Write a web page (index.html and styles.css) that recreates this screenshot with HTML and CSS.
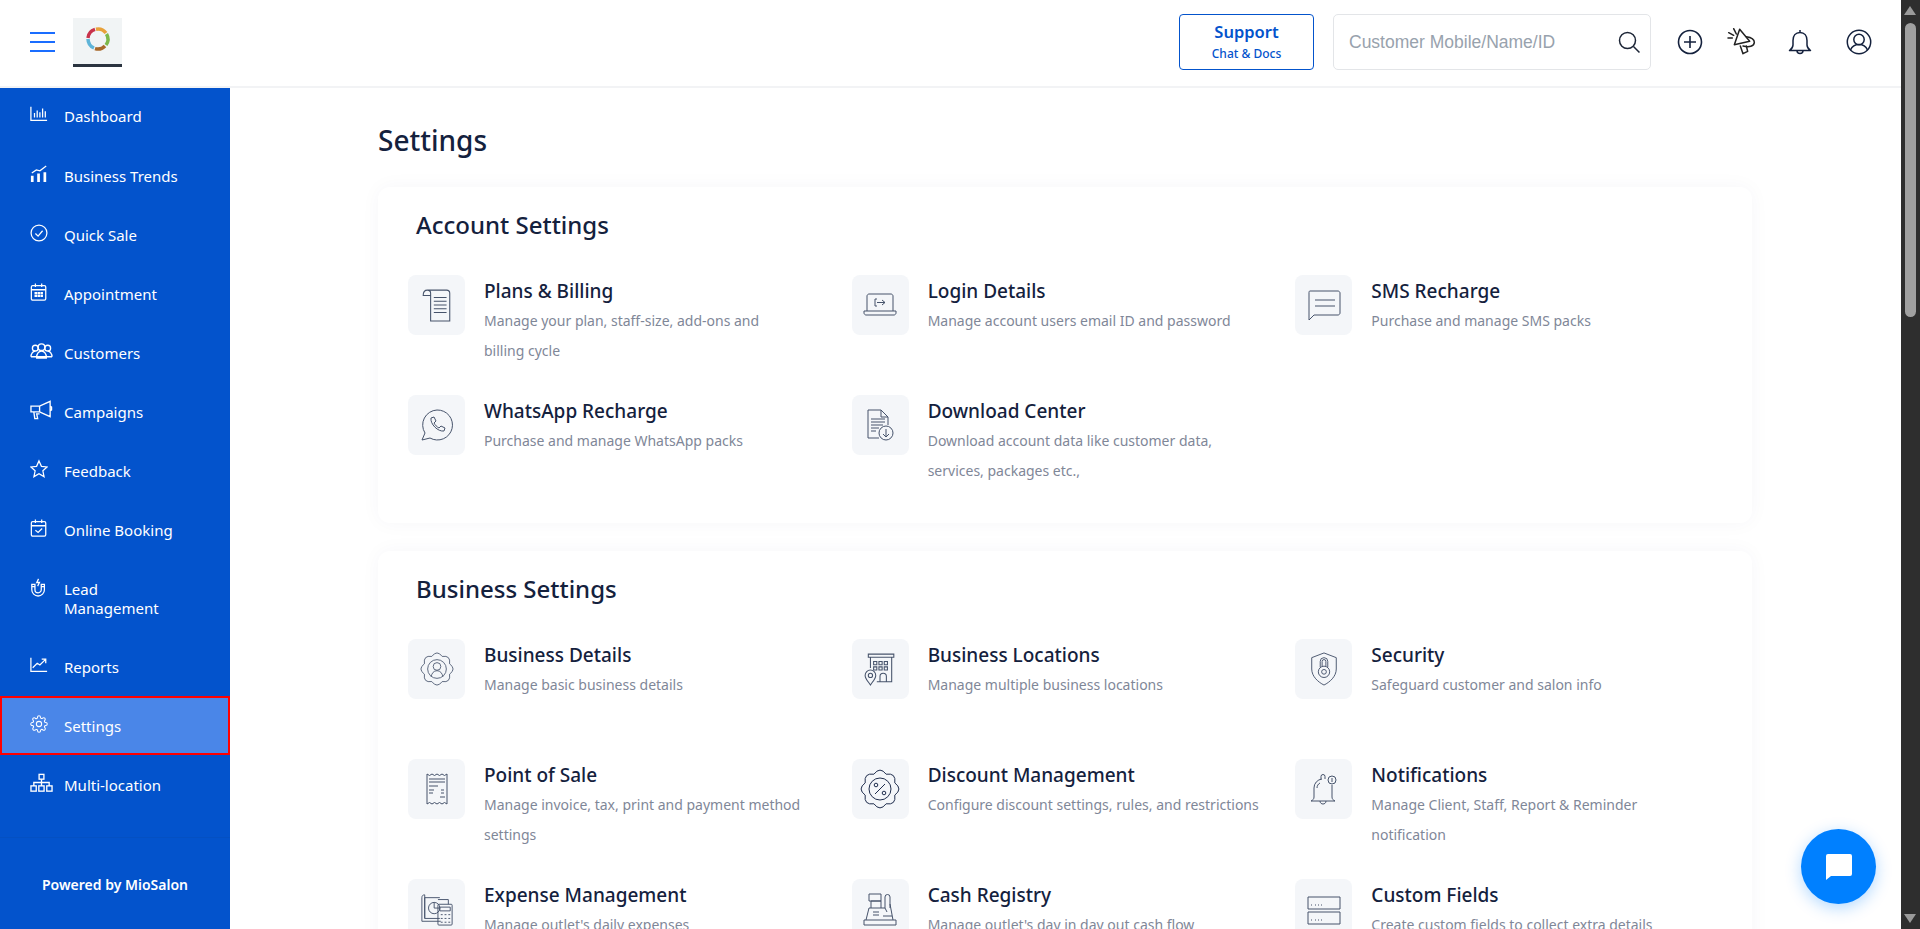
FILE: index.html

```html
<!DOCTYPE html>
<html lang="en">
<head>
  <meta charset="UTF-8" />
  <meta name="viewport" content="width=device-width, initial-scale=1.0" />
  <title>Settings</title>
  <link rel="stylesheet" href="styles.css">
</head>
<body>
  <header class="topbar">
    <div class="brand">
      <button class="menu-btn"><span></span><span></span><span></span></button>
      <div class="logo">
        <svg viewBox="0 0 30 30" width="30" height="30" fill="none" stroke-width="3.500">
          <path d="M5 14A10 10 0 0 1 12 5.400" stroke="#c8324a"/>
          <path d="M13 5.200A10 10 0 0 1 23 9" stroke="#e8a13a"/>
          <path d="M23.500 10A10 10 0 0 1 23 21" stroke="#7db84a"/>
          <path d="M22 22A10 10 0 0 1 12 24.600" stroke="#a8682a"/>
          <path d="M11 24A10 10 0 0 1 5 15" stroke="#5fb4d8"/>
        </svg>
      </div>
    </div>
    <div class="top-actions">
      <a class="support-btn"><b>Support</b><small>Chat &amp; Docs</small></a>
      <div class="search-box">
        <input type="text" placeholder="Customer Mobile/Name/ID" />
        <svg viewBox="0 0 24 24" width="24" height="24" fill="none" stroke="#1c2536" stroke-width="1.500"><circle cx="10.500" cy="10.500" r="8"/><path d="M16.500 16.500l6 6"/></svg>
      </div>
      <svg class="top-icon plus-icon" viewBox="0 0 26 26" width="26" height="26" fill="none" stroke="#14213d" stroke-width="1.600"><circle cx="13" cy="13" r="11.500"/><path d="M13 7v12M7 13h12"/></svg>
      <svg class="top-icon mega-icon" viewBox="0 0 90 90" width="30" height="30" fill="none" stroke="#222" stroke-width="4.500" stroke-linejoin="round" stroke-linecap="round"><path d="M22 53L38 7l30 36z"/><path d="M58 29c14 2 24 8 24 17 0 12-16 16-34 11"/><path d="M40 57l8 23 14-7-4-16"/><path d="M20 5l8 16M5 17l15 8M3 33h13"/></svg>
      <svg class="top-icon bell-icon" viewBox="0 0 24 27" width="24" height="27" fill="none" stroke="#14213d" stroke-width="1.500" stroke-linejoin="round"><path d="M12 1v2.500M12 3.500c-4.500 0-7 3.500-7 8v4.500c0 2-1.500 4-3.500 5.500h21c-2-1.500-3.500-3.500-3.500-5.500v-4.500c0-4.500-2.500-8-7-8z"/><path d="M9 21.500c0 4 6 4 6 0"/></svg>
      <svg class="top-icon" viewBox="0 0 26 26" width="26" height="26" fill="none" stroke="#14213d" stroke-width="1.500"><circle cx="13" cy="13" r="11.700"/><circle cx="13" cy="10.500" r="5.200"/><path d="M4.500 21c1.500-3.500 5-5.500 8.500-5.500s7 2 8.500 5.500"/></svg>
    </div>
  </header>

  <div class="layout">
    <aside class="sidebar">
      <nav class="side-nav">
        <a class="nav-item"><svg viewBox="0 0 20 20" class="nav-icon"><path d="M1 2v15h18M5 14V9M8 14V6M11 14V8M14 14V4M17 14V7"/></svg><span>Dashboard</span></a>
        <a class="nav-item"><svg viewBox="0 0 20 20" class="nav-icon"><path d="M2 9l5-3.500 4 1L18 1"/><path class="solid" d="M1 12h3v7H1zM8 9.500h3V19H8zM15 8h3v11h-3z"/></svg><span>Business Trends</span></a>
        <a class="nav-item"><svg viewBox="0 0 20 20" class="nav-icon"><circle cx="10" cy="10" r="8.800"/><path d="M6 10.500l3 3 5-6"/></svg><span>Quick Sale</span></a>
        <a class="nav-item"><svg viewBox="0 0 20 20" class="nav-icon"><rect x="1.500" y="3" width="16" height="16" rx="1.500"/><path d="M1.500 7.500h16M6 .5v4M13 .5v4"/><path class="solid" d="M5 10h2.800v2.700H5zM8.300 10h2.800v2.700H8.300zM11.600 10h2.800v2.700h-2.800zM5 13.400h2.800v2.200H5zM8.300 13.400h2.800v2.200H8.300zM11.600 13.400h2.800v2.200h-2.800z"/></svg><span>Appointment</span></a>
        <a class="nav-item"><svg viewBox="0 0 24 20" class="nav-icon wide"><circle cx="12" cy="6" r="3.500"/><circle cx="5.500" cy="7" r="3"/><circle cx="18.500" cy="7" r="3"/><path d="M1 16c0-3 2-6 4.500-6M23 16c0-3-2-6-4.500-6M1 16h22M7 16c0-3 2-6 5-6s5 3 5 6v1.500H7z"/></svg><span>Customers</span></a>
        <a class="nav-item"><svg viewBox="0 0 24 20" class="nav-icon wide"><path d="M1 6h9l11-5v16l-11-5H1zM21 6l1.500 1v3L21 11M4 12l1 7h3l-1-5h3"/><path d="M10 6v6"/></svg><span>Campaigns</span></a>
        <a class="nav-item"><svg viewBox="0 0 20 20" class="nav-icon"><path d="M10 1l2.700 6 6.300.7-4.700 4.300 1.300 6.500L10 15.200 4.400 18.500 5.700 12 1 7.700 7.300 7z"/></svg><span>Feedback</span></a>
        <a class="nav-item"><svg viewBox="0 0 20 20" class="nav-icon"><rect x="1.500" y="3" width="16" height="16" rx="1.500"/><path d="M1.500 7.500h16M6 .5v4M13 .5v4M6 12.500l3 2.500 4.500-4.500"/></svg><span>Online Booking</span></a>
        <a class="nav-item"><svg viewBox="0 0 20 20" class="nav-icon"><path d="M2 7v6a7 7 0 0 0 14 0V7h-3.500v6a3.500 3.500 0 0 1-7 0V7zM2 9.500h3.500M12.500 9.500H16"/><path d="M9.500 1L7.500 5h3l-2 4"/></svg><span>Lead<br>Management</span></a>
        <a class="nav-item"><svg viewBox="0 0 20 20" class="nav-icon"><path d="M1 2v15h18M3 13l5-5 3 2 6-6M13 3.500h4.500V8"/></svg><span>Reports</span></a>
        <a class="nav-item active"><svg viewBox="0 0 24 24" class="nav-icon"><circle cx="12" cy="12" r="3.500"/><path d="M19.400 15a1.650 1.650 0 0 0 .33 1.820l.06.06a2 2 0 0 1 0 2.830 2 2 0 0 1-2.830 0l-.06-.06a1.650 1.650 0 0 0-1.820-.33 1.650 1.650 0 0 0-1 1.510V21a2 2 0 0 1-2 2 2 2 0 0 1-2-2v-.09A1.650 1.650 0 0 0 9 19.400a1.650 1.650 0 0 0-1.820.33l-.06.06a2 2 0 0 1-2.830 0 2 2 0 0 1 0-2.830l.06-.06a1.650 1.650 0 0 0 .33-1.820 1.650 1.650 0 0 0-1.510-1H3a2 2 0 0 1-2-2 2 2 0 0 1 2-2h.09A1.650 1.650 0 0 0 4.600 9a1.650 1.650 0 0 0-.33-1.820l-.06-.06a2 2 0 0 1 0-2.830 2 2 0 0 1 2.830 0l.06.06a1.650 1.650 0 0 0 1.820.33H9a1.650 1.650 0 0 0 1-1.510V3a2 2 0 0 1 2-2 2 2 0 0 1 2 2v.09a1.650 1.650 0 0 0 1 1.510 1.650 1.650 0 0 0 1.820-.33l.06-.06a2 2 0 0 1 2.830 0 2 2 0 0 1 0 2.830l-.06.06a1.650 1.650 0 0 0-.33 1.820V9a1.650 1.650 0 0 0 1.510 1H21a2 2 0 0 1 2 2 2 2 0 0 1-2 2h-.09a1.650 1.650 0 0 0-1.510 1z"/></svg><span>Settings</span></a>
        <a class="nav-item"><svg viewBox="0 0 24 20" class="nav-icon wide"><rect x="9.500" y="1" width="5" height="5"/><rect x="1" y="13" width="5.500" height="5.500"/><rect x="9.200" y="13" width="5.500" height="5.500"/><rect x="17.500" y="13" width="5.500" height="5.500"/><path d="M12 6v7M4 13V9.500h16V13"/></svg><span>Multi-location</span></a>
      </nav>
      <div class="powered">Powered by MioSalon</div>
    </aside>

    <main class="content">
      <h1 class="page-title">Settings</h1>

      <section class="card">
        <h2>Account Settings</h2>
        <div class="tile-grid">
          <div class="tile">
            <div class="tile-icon"><svg viewBox="0 0 32 32"><path d="M7 2h18c2 0 3 1 3 3v26H10V5c0-2-1-3-3-3S3 3 3 7h7M13 9h12M13 12.500h12M13 16h12M13 19.500h12M13 23h12"/></svg></div>
            <div><h3>Plans &amp; Billing</h3><p>Manage your plan, staff-size, add-ons and<br>billing cycle</p></div>
          </div>
          <div class="tile">
            <div class="tile-icon"><svg viewBox="0 0 34 32"><path d="M4 22V7c0-1 1-2 2-2h22c1 0 2 1 2 2v15M1 22h32v2c0 1-1 2-2 2H3c-1 0-2-1-2-2zM14 10h-2v7h2M14 13.500h8M19 11l3 2.500-3 2.500"/></svg></div>
            <div><h3>Login Details</h3><p>Manage account users email ID and password</p></div>
          </div>
          <div class="tile">
            <div class="tile-icon"><svg viewBox="0 0 34 32"><path d="M3 2h28c1 0 2 1 2 2v20c0 1-1 2-2 2H7l-5 5V4c0-1 0-2 1-2zM8 11h20M8 17h20"/></svg></div>
            <div><h3>SMS Recharge</h3><p>Purchase and manage SMS packs</p></div>
          </div>
          <div class="tile">
            <div class="tile-icon"><svg viewBox="0 0 34 34"><path d="M17 2a15 15 0 1 1-7 28l-8 2 3-7A15 15 0 0 1 17 2z"/><path d="M11 10l3-1 2 4-2 2c1 2 3 4 5 5l2-2 4 2-1 3c-6 1-14-7-13-13z"/></svg></div>
            <div><h3>WhatsApp Recharge</h3><p>Purchase and manage WhatsApp packs</p></div>
          </div>
          <div class="tile">
            <div class="tile-icon"><svg viewBox="0 0 30 34"><path d="M14 30H3V2h13l7 7v8M16 2v7h7M6 11h14M6 14h14M6 17h12M6 20h8M6 23h5"/><circle cx="21" cy="25" r="7"/><path d="M21 21v8M18 26l3 3 3-3"/></svg></div>
            <div><h3>Download Center</h3><p>Download account data like customer data,<br>services, packages etc.,</p></div>
          </div>
        </div>
      </section>

      <section class="card">
        <h2>Business Settings</h2>
        <div class="tile-grid">
          <div class="tile">
            <div class="tile-icon"><svg viewBox="0 0 40 40"><path d="M34.800 13.900Q43 20 34.800 26.100Q36.300 36.300 26.100 34.800Q20 43 13.900 34.800Q3.700 36.300 5.200 26.100Q-3 20 5.200 13.900Q3.700 3.700 13.900 5.200Q20 -3 26.100 5.200Q36.300 3.700 34.800 13.900z"/><circle cx="20" cy="20" r="11"/><circle cx="20" cy="17" r="4.500"/><path d="M13 29c1-4 3-7 7-7s6 3 7 7"/></svg></div>
            <div><h3>Business Details</h3><p>Manage basic business details</p></div>
          </div>
          <div class="tile">
            <div class="tile-icon"><svg viewBox="0 0 32 32"><path d="M5 2h24v3H5zM7 5v10M27 5v23H13M10 9h3v3h-3zM15 9h3v3h-3zM20 9h3v3h-3zM10 14h3v3h-3zM15 14h3v3h-3zM20 14h3v3h-3zM16 28v-5a3 3 0 0 1 6 0v5"/><path d="M7 17a5 5 0 0 1 5 5c0 3-3 6-5 9-2-3-5-6-5-9a5 5 0 0 1 5-5z"/><circle cx="7" cy="22" r="2"/></svg></div>
            <div><h3>Business Locations</h3><p>Manage multiple business locations</p></div>
          </div>
          <div class="tile">
            <div class="tile-icon"><svg viewBox="0 0 32 36"><path d="M16 1l13 5v12c0 8-7 14-13 17C10 32 3 26 3 18V6z"/><circle cx="16" cy="21" r="6"/><circle cx="16" cy="21" r="2.500"/><path d="M12 16v-6a4 4 0 0 1 8 0v6M14 15v-5a2 2 0 0 1 4 0v5"/></svg></div>
            <div><h3>Security</h3><p>Safeguard customer and salon info</p></div>
          </div>
          <div class="tile">
            <div class="tile-icon"><svg viewBox="0 0 32 34"><path d="M6 2l2.500 1.500L11 2l2.500 1.500L16 2l2.500 1.500L21 2l2.500 1.500L26 2v30l-2.500-1.500L21 32l-2.500-1.500L16 32l-2.500-1.500L11 32l-2.500-1.500L6 32zM8 7h16M8 10h16M8 14h9M8 18h5M8 21h4M20 18h3M20 21h3M19 25h5"/></svg></div>
            <div><h3>Point of Sale</h3><p>Manage invoice, tax, print and payment method<br>settings</p></div>
          </div>
          <div class="tile">
            <div class="tile-icon"><svg class="big" viewBox="0 0 40 40"><path d="M34.800 13.900Q43 20 34.800 26.100Q36.300 36.300 26.100 34.800Q20 43 13.900 34.800Q3.700 36.300 5.200 26.100Q-3 20 5.200 13.900Q3.700 3.700 13.900 5.200Q20 -3 26.100 5.200Q36.300 3.700 34.800 13.900z"/><circle cx="20" cy="20" r="11"/><path d="M15 25l10-10"/><circle cx="16" cy="16" r="1.800"/><circle cx="24" cy="24" r="1.800"/></svg></div>
            <div><h3>Discount Management</h3><p>Configure discount settings, rules, and restrictions</p></div>
          </div>
          <div class="tile">
            <div class="tile-icon"><svg viewBox="0 0 32 34"><path d="M14 7a9 9 0 0 0-8 9v9c0 2-1 3-3 4h24c-2-1-3-2-3-4V13M13 7V4.500a2 2 0 0 1 4 0V7M12 29c0 4 6 4 6 0M9 16c0-2 1-4 3-5"/><circle cx="24" cy="8" r="4"/><path d="M24 6v4"/></svg></div>
            <div><h3>Notifications</h3><p>Manage Client, Staff, Report &amp; Reminder<br>notification</p></div>
          </div>
          <div class="tile">
            <div class="tile-icon"><svg viewBox="0 0 34 36"><path d="M20 6H4v22h16M4 3c-2 0-3 1-3 3v25h20M4 3v25"/><circle cx="14" cy="17" r="6"/><path d="M14 11v6h6"/><rect x="18" y="13" width="15" height="22" rx="1"/><path d="M20 16h11v4H20zM21 24h2M25 24h2M29 24h2M21 28h2M25 28h2M29 28h2M21 32h2M25 32h2M29 32h2M18 8h11v5"/></svg></div>
            <div><h3>Expense Management</h3><p>Manage outlet's daily expenses</p></div>
          </div>
          <div class="tile">
            <div class="tile-icon"><svg viewBox="0 0 34 34"><path d="M1 33v-5h32v5zM3 28l3-12h16l2 4M8 16V9h10v7M6 2h12v7H6zM10 20h6M10 23h6M22 16V5a2 2 0 0 1 5 0v11M27 12l3 16M20 24h9"/></svg></div>
            <div><h3>Cash Registry</h3><p>Manage outlet's day in day out cash flow</p></div>
          </div>
          <div class="tile">
            <div class="tile-icon"><svg viewBox="0 0 34 32"><path d="M1 4h32v12H1zM1 19h32v12H1zM4 12h1M4 27h1M8 12h1M11 12h1M14 12h1M8 27h1M11 27h1M14 27h1"/></svg></div>
            <div><h3>Custom Fields</h3><p>Create custom fields to collect extra details</p></div>
          </div>
        </div>
      </section>
    </main>
  </div>

  <button class="chat-btn">
    <svg viewBox="0 0 26 26" width="26" height="26"><path fill="#fff" d="M2 0h22a2 2 0 0 1 2 2v18a2 2 0 0 1-2 2H5l-5 4V2a2 2 0 0 1 2-2z"/></svg>
  </button>

  <div class="fake-scroll"><i class="arrow-up"></i><i class="thumb"></i><i class="arrow-down"></i></div>
</body>
</html>
```

FILE: styles.css

```css
* {
  box-sizing: border-box;
}
html, body {
  height: 100%;
  margin: 0;
  overflow: hidden;
}
body {
  font-family: "Noto Sans", Arial, sans-serif;
  background-color: #fff;
  color: #14213d;
  display: flex;
  flex-direction: column;
}
.topbar {
  height: 88px;
  flex: none;
  display: flex;
  align-items: center;
  justify-content: space-between;
  padding: 0 48px 2px 30px;
  background: #fff;
  border-bottom: 2px solid #f2f3f5;
}
.brand {
  display: flex;
  align-items: center;
  gap: 18px;
}
.menu-btn {
  width: 25px;
  padding: 0;
  border: none;
  background: none;
  display: flex;
  flex-direction: column;
  gap: 7px;
}
.menu-btn span {
  display: block;
  height: 2px;
  background-color: #1a6dff;
}
.logo {
  width: 49px;
  height: 49px;
  display: flex;
  align-items: center;
  justify-content: center;
  padding-bottom: 4px;
  background-color: #f1f4f5;
  border-bottom: 3px solid #2b3440;
}
.top-actions {
  display: flex;
  align-items: center;
}
.support-btn {
  width: 135px;
  height: 56px;
  display: flex;
  flex-direction: column;
  align-items: center;
  justify-content: center;
  border: 1px solid #0353cc;
  border-radius: 4px;
  color: #0353cc;
}
.support-btn b {
  font-size: 16.500px;
  font-weight: 600;
  line-height: 24px;
}
.support-btn small {
  font-size: 12px;
  font-weight: 500;
  line-height: 20px;
}
.search-box {
  width: 318px;
  height: 56px;
  margin: 0 26px 0 19px;
  padding: 0 9px 0 15px;
  display: flex;
  align-items: center;
  border: 1px solid #e3e5e8;
  border-radius: 5px;
}
.search-box input {
  flex: 1;
  min-width: 0;
  border: none;
  outline: none;
  padding: 0;
  font-family: "Liberation Sans", Arial, sans-serif;
  font-size: 17.500px;
}
.search-box input::placeholder {
  color: #98a2ad;
}
.top-icon {
  flex: none;
}
.top-icon.plus-icon {
  margin-right: 24px;
}
.top-icon.mega-icon {
  margin-right: 31px;
}
.top-icon.bell-icon {
  margin-right: 34px;
}
.layout {
  flex: 1;
  min-height: 0;
  display: flex;
}
.sidebar {
  width: 230px;
  flex: none;
  display: flex;
  flex-direction: column;
  background-color: #0353cc;
  color: #fff;
}
.side-nav {
  flex: 1;
}
.nav-item {
  display: flex;
  align-items: flex-start;
  gap: 16px;
  padding: 21px 30px 19px;
  font-size: 15px;
  line-height: 19px;
  color: #fff;
}
.nav-item:first-child {
  padding-top: 19px;
  padding-bottom: 20px;
}
.nav-item.active {
  background-color: #4a86e8;
  outline: 2px solid #f00;
  outline-offset: -2px;
}
.nav-icon {
  width: 18px;
  height: 20px;
  flex: none;
  fill: none;
  stroke: #fff;
  stroke-width: 1.400;
  margin-top: -3px;
}
.nav-icon.wide {
  width: 23px;
  margin-right: -5px;
}
.nav-icon .solid {
  fill: #fff;
  stroke: none;
}
.powered {
  height: 92px;
  flex: none;
  display: flex;
  align-items: center;
  justify-content: center;
  padding-top: 2px;
  border-top: 1px solid #0450c2;
  font-size: 14px;
  font-weight: 600;
}
.content {
  flex: 1;
  min-width: 0;
  overflow: hidden;
  padding: 28px 168px 0 148px;
}
.page-title {
  margin: 0 0 23px;
  font-size: 28px;
  font-weight: 500;
  line-height: 48px;
  color: #14213d;
}
.card {
  margin-bottom: 28px;
  padding: 18px 29px 8px 30px;
  background: #fff;
  border-radius: 12px;
  box-shadow: 0 0 20px rgba(30, 50, 90, 0.04);
}
.card h2 {
  margin: 0 0 30px 8px;
  font-size: 24px;
  font-weight: 500;
  line-height: 40px;
  color: #14213d;
}
.tile-grid {
  display: grid;
  grid-template-columns: repeat(3, 1fr);
  column-gap: 16px;
}
.tile {
  height: 120px;
  display: flex;
  gap: 19px;
}
.tile-icon {
  width: 57px;
  height: 60px;
  flex: none;
  display: flex;
  align-items: center;
  justify-content: center;
  background-color: #f4f6f9;
  border-radius: 8px;
}
.tile-icon svg {
  width: 34px;
  height: 34px;
  fill: none;
  stroke: #46536b;
  stroke-width: 1;
}
.tile-icon svg.big {
  width: 40px;
  height: 40px;
  stroke: #1f2d4d;
}
.tile h3 {
  margin: 0;
  padding-top: 1px;
  font-size: 19px;
  font-weight: 500;
  line-height: 30px;
  color: #14213d;
}
.tile p {
  margin: 0;
  font-size: 14px;
  line-height: 30px;
  color: #7f8798;
}
.chat-btn {
  position: fixed;
  left: 1801px;
  top: 829px;
  width: 75px;
  height: 75px;
  display: flex;
  align-items: center;
  justify-content: center;
  padding: 0;
  border: none;
  border-radius: 50%;
  background-color: #0080ff;
  box-shadow: 0 4px 16px rgba(0, 128, 255, 0.3);
}
.fake-scroll {
  position: fixed;
  top: 0;
  right: 0;
  bottom: 0;
  width: 19px;
  background-color: #2e2e2e;
}
.fake-scroll i {
  position: absolute;
  display: block;
}
.arrow-up {
  top: 6px;
  left: 3px;
  border-left: 6.500px solid transparent;
  border-right: 6.500px solid transparent;
  border-bottom: 9px solid #9a9a9a;
}
.arrow-down {
  bottom: 6px;
  left: 3px;
  border-left: 6.500px solid transparent;
  border-right: 6.500px solid transparent;
  border-top: 9px solid #9a9a9a;
}
.thumb {
  top: 23px;
  left: 4px;
  width: 11px;
  height: 294px;
  border-radius: 6px;
  background-color: #a0a0a0;
}
```
